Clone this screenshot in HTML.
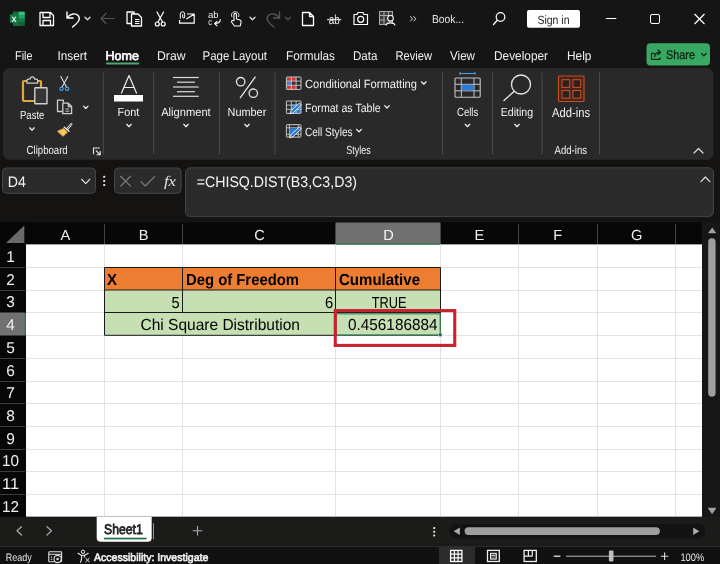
<!DOCTYPE html>
<html lang="en"><head><meta charset="utf-8"><title>Book1 - Excel</title>
<style>
html,body{margin:0;padding:0;background:#151515;overflow:hidden}
svg{display:block;font-family:"Liberation Sans", sans-serif;will-change:transform;text-rendering:geometricPrecision}
</style></head>
<body>
<svg width="720" height="564" viewBox="0 0 720 564">
<rect x="0" y="0" width="720" height="564" fill="#151515" rx="0" />
<rect x="0" y="160" width="720" height="63" fill="#151312" rx="0" />
<rect x="13" y="11.7" width="11.7" height="14.2" fill="#1d7044" rx="1.5" />
<rect x="18.5" y="11.7" width="6.2" height="3.6" fill="#33c481" rx="0" />
<rect x="18.5" y="15.3" width="6.2" height="3.5" fill="#21a366" rx="0" />
<rect x="18.5" y="18.8" width="6.2" height="3.5" fill="#107c41" rx="0" />
<rect x="18.5" y="22.3" width="6.2" height="3.6" fill="#185c37" rx="0" />
<rect x="13" y="11.7" width="5.5" height="14.2" fill="#1a6b3f" rx="0" />
<rect x="9.8" y="14.2" width="8.7" height="8.7" fill="#107c41" rx="1.2" />
<text x="11.6" y="21.6" font-size="7.6" fill="#fff" font-weight="bold" textLength="5.0" lengthAdjust="spacingAndGlyphs" >X</text>
<path d="M40 12.5 H50.5 L53.5 15.5 V25.5 H40 Z M43 12.5 V17.5 H50 V12.5 M43 25.5 V20.5 H50.5 V25.5" stroke="#fff" stroke-width="1.3" fill="none" stroke-linejoin="round"/>
<path d="M67 12 V18 H73 M67.5 17.5 C70 13.5 76 12.5 78.5 16 C80.5 19 78.5 22 75.5 24.5 L72.5 27" stroke="#fff" stroke-width="1.4" fill="none" stroke-linecap="round" stroke-linejoin="round"/>
<path d="M85.0 17.2 L87.5 19.8 L90.0 17.2" stroke="#ddd" stroke-width="1.3" fill="none" stroke-linecap="round" stroke-linejoin="round"/>
<path d="M114 18.5 H101 M106 13.5 L101 18.5 L106 23.5" stroke="#555" stroke-width="1.2" fill="none" stroke-linecap="round" stroke-linejoin="round"/>
<path d="M131 23.5 H127 V12 H134 V13.5 M131.5 14 H138 L141.5 17.5 V26 H131.5 Z" stroke="#fff" stroke-width="1.3" fill="none" stroke-linejoin="round"/>
<path d="M135 19.5 H139.5 M135 21.5 H139.5 M135 23.5 H139.5" stroke="#fff" stroke-width="1" fill="none" />
<path d="M157 12 L162.5 22 M163.5 12 L158 22" stroke="#fff" stroke-width="1.2" fill="none" stroke-linecap="round"/>
<circle cx="157.3" cy="24" r="2" stroke="#fff" stroke-width="1.2" fill="none"/><circle cx="163.2" cy="24" r="2" stroke="#fff" stroke-width="1.2" fill="none"/>
<path d="M187 14 H194.2 V23.2 H179.6 V20 M186.3 19 L194 14.3" stroke="#fff" stroke-width="1.2" fill="none" stroke-linejoin="round"/>
<path d="M180.3 18.3 V14.2 a2.2 2.4 0 0 1 4.4 0 V17 a1 1 0 0 1 -2 0 V14.6" stroke="#fff" stroke-width="1" fill="none" stroke-linecap="round"/>
<text x="208" y="18.2" font-size="9.5" fill="#f0f0f0" font-weight="normal" textLength="10.5" lengthAdjust="spacingAndGlyphs" >ab</text>
<text x="208.2" y="25.2" font-size="9.5" fill="#f0f0f0" font-weight="normal" textLength="3.8" lengthAdjust="spacingAndGlyphs" >c</text>
<path d="M220.3 19.5 C220.3 22.5 218 23.5 214.8 23.5 M217 21.3 L214.6 23.5 L217 25.8" stroke="#fff" stroke-width="1.1" fill="none" stroke-linecap="round" stroke-linejoin="round"/>
<path d="M234 21 V14.5 C234 13 236.5 13 236.5 14.5 V19 L240 20 C241 20.3 241.3 21 241 22.5 L240.3 26 H234.5 L231.5 22 C231 21 232.5 20 233.5 21" stroke="#fff" stroke-width="1.1" fill="none" stroke-linejoin="round"/>
<path d="M232 17 C230.5 14 232.5 11.8 235.2 11.8 C238 11.8 239.8 14 238.5 17" stroke="#ddd" stroke-width="1" fill="none" />
<path d="M250.0 17.2 L252.5 19.8 L255.0 17.2" stroke="#ddd" stroke-width="1.3" fill="none" stroke-linecap="round" stroke-linejoin="round"/>
<path d="M279.5 12 V18 H273.5 M279 17.5 C276.5 13.5 270.5 12.5 268 16 C266 19 268 22 271 24.5 L274 27" stroke="#555" stroke-width="1.4" fill="none" stroke-linecap="round" stroke-linejoin="round"/>
<path d="M285.5 17.2 L288 19.8 L290.5 17.2" stroke="#555" stroke-width="1.3" fill="none" stroke-linecap="round" stroke-linejoin="round"/>
<path d="M302.5 12.5 H309.5 L313.5 16.5 V25.5 H302.5 Z M309.5 12.5 V16.5 H313.5" stroke="#fff" stroke-width="1.3" fill="none" stroke-linejoin="round"/>
<text x="328.7" y="23.7" font-size="13" fill="#f0f0f0" font-weight="normal" textLength="11.0" lengthAdjust="spacingAndGlyphs" >ab</text>
<line x1="327" y1="19.7" x2="341.3" y2="19.7" stroke="#f0f0f0" stroke-width="1" />
<path d="M354 14.5 H357 L358 12.5 H363 L364 14.5 H367.5 V24.5 H354 Z" stroke="#fff" stroke-width="1.2" fill="none" stroke-linejoin="round"/>
<circle cx="360.7" cy="19.3" r="3" stroke="#fff" stroke-width="1.2" fill="none"/>
<rect x="379.5" y="11.5" width="13" height="13" fill="#3a3a3a" rx="0" stroke="#aaa" stroke-width="1" />
<path d="M379.5 15.5 H392.5 M384 11.5 V24.5 M388.5 11.5 V15.5 M379.5 20 H385" stroke="#aaa" stroke-width="1" fill="none" />
<circle cx="390.5" cy="18.3" r="2.8" stroke="#fff" stroke-width="1.1" fill="#151515"/>
<path d="M386 25.5 C386.5 22 394.5 22 395 25.5" stroke="#fff" stroke-width="1.1" fill="#151515" />
<path d="M410.5 16.5 L412.5 18.8 L410.5 21 M413.8 16.5 L415.8 18.8 L413.8 21" stroke="#ddd" stroke-width="1" fill="none" stroke-linecap="round" stroke-linejoin="round"/>
<text x="432" y="23" font-size="11.5" fill="#e6e6e6" font-weight="normal" textLength="32" lengthAdjust="spacingAndGlyphs" >Book...</text>
<circle cx="500.5" cy="17" r="4.3" stroke="#fff" stroke-width="1.2" fill="none"/>
<line x1="497.3" y1="20.3" x2="493.5" y2="24.5" stroke="#fff" stroke-width="1.3" stroke-linecap="round"/>
<rect x="527" y="10" width="53" height="17.8" fill="#fff" rx="2" />
<text x="537.5" y="23.5" font-size="12" fill="#1a1a1a" font-weight="normal" textLength="32.0" lengthAdjust="spacingAndGlyphs" >Sign in</text>
<line x1="605.8" y1="18.5" x2="616.3" y2="18.5" stroke="#fff" stroke-width="1" />
<rect x="650.5" y="14.5" width="9" height="9" fill="none" rx="1.5" stroke="#fff" stroke-width="1" />
<path d="M694.5 14 L704.5 24 M704.5 14 L694.5 24" stroke="#fff" stroke-width="1.2" fill="none" />
<text x="15" y="59.5" font-size="12.6" fill="#f0f0f0" font-weight="normal" textLength="17.5" lengthAdjust="spacingAndGlyphs" >File</text>
<text x="57.5" y="59.5" font-size="12.6" fill="#f0f0f0" font-weight="normal" textLength="29.5" lengthAdjust="spacingAndGlyphs" >Insert</text>
<text x="157" y="59.5" font-size="12.6" fill="#f0f0f0" font-weight="normal" textLength="28.5" lengthAdjust="spacingAndGlyphs" >Draw</text>
<text x="202.5" y="59.5" font-size="12.6" fill="#f0f0f0" font-weight="normal" textLength="64.5" lengthAdjust="spacingAndGlyphs" >Page Layout</text>
<text x="286" y="59.5" font-size="12.6" fill="#f0f0f0" font-weight="normal" textLength="49" lengthAdjust="spacingAndGlyphs" >Formulas</text>
<text x="353" y="59.5" font-size="12.6" fill="#f0f0f0" font-weight="normal" textLength="24.5" lengthAdjust="spacingAndGlyphs" >Data</text>
<text x="395.5" y="59.5" font-size="12.6" fill="#f0f0f0" font-weight="normal" textLength="36.5" lengthAdjust="spacingAndGlyphs" >Review</text>
<text x="450" y="59.5" font-size="12.6" fill="#f0f0f0" font-weight="normal" textLength="25" lengthAdjust="spacingAndGlyphs" >View</text>
<text x="494" y="59.5" font-size="12.6" fill="#f0f0f0" font-weight="normal" textLength="54" lengthAdjust="spacingAndGlyphs" >Developer</text>
<text x="567" y="59.5" font-size="12.6" fill="#f0f0f0" font-weight="normal" textLength="24.5" lengthAdjust="spacingAndGlyphs" >Help</text>
<text x="105.5" y="59.5" font-size="12.6" fill="#fff" font-weight="normal" textLength="33.5" lengthAdjust="spacingAndGlyphs" stroke="#fff" stroke-width="0.65">Home</text>
<rect x="106" y="62.6" width="33.3" height="1.9" fill="#4ea870" rx="0.9" />
<rect x="646.5" y="43.2" width="63.5" height="22.2" fill="#38a862" rx="4" />
<path d="M654.3 53.3 H651.5 V59.3 H660 V57.6 M654.6 56.8 C654.9 53.8 656.8 52.3 659.8 52.3 M657.8 50 L660.6 52.3 L657.8 54.7" stroke="#0c2414" stroke-width="1.15" fill="none" stroke-linecap="round" stroke-linejoin="round"/>
<text x="666.1" y="58.9" font-size="12.6" fill="#0c2414" font-weight="normal" textLength="28.9" lengthAdjust="spacingAndGlyphs" stroke="#0c2414" stroke-width="0.3">Share</text>
<path d="M701.5 53.5 L703.8 55.900000000000006 L706.0999999999999 53.5" stroke="#0c2414" stroke-width="1.2" fill="none" stroke-linecap="round" stroke-linejoin="round"/>
<rect x="3" y="68" width="710.5" height="91.8" fill="#292929" rx="7" />
<line x1="103.3" y1="72.5" x2="103.3" y2="154.5" stroke="#4a4a4a" stroke-width="1" />
<line x1="153.7" y1="72.5" x2="153.7" y2="154.5" stroke="#4a4a4a" stroke-width="1" />
<line x1="219.5" y1="72.5" x2="219.5" y2="154.5" stroke="#4a4a4a" stroke-width="1" />
<line x1="275" y1="72.5" x2="275" y2="154.5" stroke="#4a4a4a" stroke-width="1" />
<line x1="442.5" y1="72.5" x2="442.5" y2="154.5" stroke="#4a4a4a" stroke-width="1" />
<line x1="492.5" y1="72.5" x2="492.5" y2="154.5" stroke="#4a4a4a" stroke-width="1" />
<line x1="542" y1="72.5" x2="542" y2="154.5" stroke="#4a4a4a" stroke-width="1" />
<line x1="599.5" y1="72.5" x2="599.5" y2="154.5" stroke="#4a4a4a" stroke-width="1" />
<rect x="23" y="81" width="18" height="20" fill="none" rx="1" stroke="#e0a83c" stroke-width="2.2" />
<path d="M27 83.2 V80.2 Q27 79.2 28 79.2 H30 Q30.3 76.8 32.3 76.8 Q34.3 76.8 34.6 79.2 H36.6 Q37.6 79.2 37.6 80.2 V83.2 Z" stroke="#cfcfcf" stroke-width="1.2" fill="#292929" stroke-linejoin="round"/>
<rect x="34.8" y="87.8" width="12.2" height="16" fill="#353535" rx="0.6" stroke="#d0d0d0" stroke-width="1.4" />
<text x="20" y="118.6" font-size="11.8" fill="#f0f0f0" font-weight="normal" textLength="24.4" lengthAdjust="spacingAndGlyphs" >Paste</text>
<path d="M29.75 127.8 L32 130.2 L34.25 127.8" stroke="#eee" stroke-width="1.25" fill="none" stroke-linecap="round" stroke-linejoin="round"/>
<path d="M60.8 76.5 L66.6 87.2 M67.8 76.5 L62 87.2" stroke="#ddd" stroke-width="1.1" fill="none" stroke-linecap="round"/>
<circle cx="61.5" cy="88.8" r="1.7" stroke="#4aa3e8" stroke-width="1.1" fill="none"/><circle cx="67.1" cy="88.8" r="1.7" stroke="#4aa3e8" stroke-width="1.1" fill="none"/>
<path d="M62 111.5 H57.5 V100.2 H63.3 V102.5" stroke="#cfcfcf" stroke-width="1.3" fill="none" stroke-linejoin="round"/>
<path d="M62.8 103.2 H68.3 L71.6 106.5 V113.7 H62.8 Z M68.3 103.2 V106.5 H71.6" stroke="#cfcfcf" stroke-width="1.3" fill="none" stroke-linejoin="round"/>
<path d="M65.3 109 H69.3 M65.3 111.2 H69.3" stroke="#cfcfcf" stroke-width="0.9" fill="none" />
<path d="M83.55 106.1 L85.8 108.5 L88.05 106.1" stroke="#eee" stroke-width="1.25" fill="none" stroke-linecap="round" stroke-linejoin="round"/>
<path d="M71.3 124.3 L67.3 129" stroke="#e6e6e6" stroke-width="2.4" fill="none" stroke-linecap="round"/>
<path d="M71.3 124.3 L67.3 129" stroke="#292929" stroke-width="0.8" fill="none" stroke-linecap="round"/>
<path d="M64.3 127.3 L69 131.3" stroke="#e6e6e6" stroke-width="1.5" fill="none" stroke-linecap="round"/>
<path d="M63.6 128.6 L57.6 131.3 L63 136.3 L67.3 132.3 Z" stroke="#e8a830" stroke-width="1" fill="#f2c868" stroke-linejoin="round"/>
<text x="26.6" y="154.2" font-size="11.8" fill="#f0f0f0" font-weight="normal" textLength="41.1" lengthAdjust="spacingAndGlyphs" >Clipboard</text>
<path d="M93.5 154.3 V148 H99.8" stroke="#e6e6e6" stroke-width="1.1" fill="none" stroke-linejoin="miter"/>
<path d="M95.8 150.3 L100 154.5 M100.2 151 V154.7 H96.5" stroke="#e6e6e6" stroke-width="1.1" fill="none" />
<path d="M121.3 93.5 L129 75.5 L136.7 93.5 M123.8 87.5 H134.2" stroke="#f0f0f0" stroke-width="1.2" fill="none" stroke-linejoin="round"/>
<rect x="114" y="95" width="29" height="6.5" fill="#fff" rx="0" />
<text x="117.5" y="115.5" font-size="11.8" fill="#f0f0f0" font-weight="normal" textLength="21.8" lengthAdjust="spacingAndGlyphs" >Font</text>
<path d="M126.75 124.3 L129 126.7 L131.25 124.3" stroke="#eee" stroke-width="1.25" fill="none" stroke-linecap="round" stroke-linejoin="round"/>
<line x1="173" y1="77.5" x2="198.7" y2="77.5" stroke="#dcdcdc" stroke-width="1.2" />
<line x1="177" y1="82.2" x2="195" y2="82.2" stroke="#dcdcdc" stroke-width="1.2" />
<line x1="173" y1="87" x2="198.7" y2="87" stroke="#dcdcdc" stroke-width="1.2" />
<line x1="177" y1="91.7" x2="195" y2="91.7" stroke="#dcdcdc" stroke-width="1.2" />
<line x1="173" y1="96.3" x2="198.7" y2="96.3" stroke="#dcdcdc" stroke-width="1.2" />
<text x="161.2" y="115.5" font-size="11.8" fill="#f0f0f0" font-weight="normal" textLength="49.5" lengthAdjust="spacingAndGlyphs" >Alignment</text>
<path d="M183.75 124.3 L186 126.7 L188.25 124.3" stroke="#eee" stroke-width="1.25" fill="none" stroke-linecap="round" stroke-linejoin="round"/>
<circle cx="240.7" cy="81.7" r="4.2" stroke="#e6e6e6" stroke-width="1.3" fill="none"/><circle cx="253.3" cy="93.2" r="4.2" stroke="#e6e6e6" stroke-width="1.3" fill="none"/>
<line x1="255.5" y1="76.7" x2="240" y2="98.2" stroke="#e6e6e6" stroke-width="1.3" />
<text x="227.5" y="115.5" font-size="11.8" fill="#f0f0f0" font-weight="normal" textLength="38.8" lengthAdjust="spacingAndGlyphs" >Number</text>
<path d="M244.75 124.3 L247 126.7 L249.25 124.3" stroke="#eee" stroke-width="1.25" fill="none" stroke-linecap="round" stroke-linejoin="round"/>
<rect x="286.7" y="77.3" width="9.5" height="3.9" fill="#d8332f" rx="0" />
<rect x="286.7" y="85.6" width="9.5" height="3.9" fill="#d8332f" rx="0" />
<rect x="286.7" y="81.3" width="4.6" height="4.2" fill="#3b7fd8" rx="0" />
<rect x="291.5" y="81.4" width="4.6" height="4" fill="#4a2626" rx="0" />
<rect x="286.4" y="77" width="14.6" height="12.4" fill="none" rx="0.5" stroke="#c8c8c8" stroke-width="1" />
<path d="M286.4 81.1 H301.0 M286.4 85.3 H301.0 M291.29999999999995 77 V89.4 M296.09999999999997 77 V89.4" stroke="#c8c8c8" stroke-width="0.9" fill="none" />
<text x="305" y="88" font-size="12.0" fill="#f0f0f0" font-weight="normal" textLength="112" lengthAdjust="spacingAndGlyphs" >Conditional Formatting</text>
<path d="M421.5 81.8 L423.8 84.2 L426.1 81.8" stroke="#eee" stroke-width="1.25" fill="none" stroke-linecap="round" stroke-linejoin="round"/>
<rect x="291.5" y="104.5" width="9.5" height="9" fill="#2b7cd3" rx="0" />
<rect x="286.4" y="101" width="14.6" height="12.4" fill="none" rx="0.5" stroke="#c8c8c8" stroke-width="1" />
<path d="M286.4 105.1 H301.0 M286.4 109.3 H301.0 M291.29999999999995 101 V113.4 M296.09999999999997 101 V113.4" stroke="#c8c8c8" stroke-width="0.9" fill="none" />
<path d="M289.8 113.8 L291 110.5 L299.5 103 L301.3 105 L293 112.8 Z" stroke="#f0f0f0" stroke-width="0.9" fill="#2b7cd3" stroke-linejoin="round"/>
<text x="305" y="111.5" font-size="12.0" fill="#f0f0f0" font-weight="normal" textLength="75.7" lengthAdjust="spacingAndGlyphs" >Format as Table</text>
<path d="M384.7 105.6 L387 108.0 L389.3 105.6" stroke="#eee" stroke-width="1.25" fill="none" stroke-linecap="round" stroke-linejoin="round"/>
<rect x="286.4" y="124.7" width="14.6" height="12.4" fill="none" rx="0.5" stroke="#c8c8c8" stroke-width="1" />
<path d="M286.4 127.8 H301 M289.4 124.7 V137.1 M286.4 134.3 H301 M298.2 124.7 V137.1" stroke="#c8c8c8" stroke-width="0.9" fill="none" />
<rect x="289.9" y="128.3" width="7.8" height="5.5" fill="#2b7cd3" rx="0" />
<path d="M289.8 137.8 L291 134.5 L299.5 127 L301.3 129 L293 136.8 Z" stroke="#f0f0f0" stroke-width="0.9" fill="#2b7cd3" stroke-linejoin="round"/>
<text x="305" y="135.5" font-size="12.0" fill="#f0f0f0" font-weight="normal" textLength="47.5" lengthAdjust="spacingAndGlyphs" >Cell Styles</text>
<path d="M356.7 129.5 L359 131.89999999999998 L361.3 129.5" stroke="#eee" stroke-width="1.25" fill="none" stroke-linecap="round" stroke-linejoin="round"/>
<text x="346.2" y="154.2" font-size="11.8" fill="#f0f0f0" font-weight="normal" textLength="24.5" lengthAdjust="spacingAndGlyphs" >Styles</text>
<path d="M460 73.5 H475 M460 72 V75 M475 72 V75" stroke="#4aa3e8" stroke-width="1" fill="none" />
<rect x="455" y="78" width="25.2" height="19.3" fill="none" rx="1" stroke="#c4c4c4" stroke-width="1.1" />
<path d="M455 84.3 H480.2 M455 90.8 H480.2 M461.3 78 V97.3 M474 78 V97.3" stroke="#c4c4c4" stroke-width="1" fill="none" />
<rect x="461.8" y="84.8" width="11.7" height="5.5" fill="#2b7cd3" rx="0" />
<text x="457" y="115.5" font-size="11.8" fill="#f0f0f0" font-weight="normal" textLength="21.2" lengthAdjust="spacingAndGlyphs" >Cells</text>
<path d="M465.25 124.3 L467.5 126.7 L469.75 124.3" stroke="#eee" stroke-width="1.25" fill="none" stroke-linecap="round" stroke-linejoin="round"/>
<circle cx="521" cy="84.5" r="9.5" stroke="#e6e6e6" stroke-width="1.3" fill="none"/>
<line x1="514" y1="91.5" x2="504" y2="100.5" stroke="#e6e6e6" stroke-width="1.4" stroke-linecap="round"/>
<text x="500.7" y="115.5" font-size="11.8" fill="#f0f0f0" font-weight="normal" textLength="32.5" lengthAdjust="spacingAndGlyphs" >Editing</text>
<path d="M514.75 124.3 L517 126.7 L519.25 124.3" stroke="#eee" stroke-width="1.25" fill="none" stroke-linecap="round" stroke-linejoin="round"/>
<rect x="558.5" y="76" width="25.5" height="25.5" fill="#4a2418" rx="1" stroke="#c0502a" stroke-width="1.2" />
<rect x="562" y="79.7" width="7.7" height="7.7" fill="#2c211d" rx="0" stroke="#c0502a" stroke-width="1.1" />
<rect x="573" y="79.7" width="7.7" height="7.7" fill="#2c211d" rx="0" stroke="#c0502a" stroke-width="1.1" />
<rect x="562" y="90.5" width="7.7" height="7.7" fill="#2c211d" rx="0" stroke="#c0502a" stroke-width="1.1" />
<rect x="573" y="90.5" width="7.7" height="7.7" fill="#2c211d" rx="0" stroke="#c0502a" stroke-width="1.1" />
<text x="552" y="117.3" font-size="13.2" fill="#f0f0f0" font-weight="normal" textLength="38" lengthAdjust="spacingAndGlyphs" >Add-ins</text>
<text x="554.5" y="154.2" font-size="11.8" fill="#f0f0f0" font-weight="normal" textLength="32.5" lengthAdjust="spacingAndGlyphs" >Add-ins</text>
<path d="M694 153 L698.5 148.5 L703 153" stroke="#ddd" stroke-width="1.2" fill="none" stroke-linecap="round" stroke-linejoin="round"/>
<rect x="2.5" y="168" width="93" height="25.3" fill="#2b2b2b" rx="4" stroke="#454545" stroke-width="1" />
<text x="7.7" y="187" font-size="15.3" fill="#f0f0f0" font-weight="normal" textLength="18.1" lengthAdjust="spacingAndGlyphs" >D4</text>
<path d="M81.60000000000001 179.25 L85.7 183.55 L89.8 179.25" stroke="#e6e6e6" stroke-width="1.1" fill="none" stroke-linecap="round" stroke-linejoin="round"/>
<rect x="103.2" y="175.7" width="2" height="2" rx="0.5" fill="#e0e0e0"/>
<rect x="103.2" y="179.9" width="2" height="2" rx="0.5" fill="#e0e0e0"/>
<rect x="103.2" y="184" width="2" height="2" rx="0.5" fill="#e0e0e0"/>
<rect x="114.5" y="168" width="66.6" height="25.3" fill="#2b2b2b" rx="4" stroke="#454545" stroke-width="1" />
<path d="M120.3 176 L130.8 186.4 M130.8 176 L120.3 186.4" stroke="#808080" stroke-width="1.1" fill="none" />
<path d="M140.8 181.5 L145.3 186 L154.8 176.3" stroke="#808080" stroke-width="1.1" fill="none" />
<text x="164" y="186.3" font-size="14.5" fill="#e6e6e6" font-weight="normal" textLength="12" lengthAdjust="spacingAndGlyphs" font-family='"Liberation Serif", serif' font-style="italic">fx</text>
<rect x="185.5" y="167.8" width="528" height="48.8" fill="#2b2b2b" rx="5" stroke="#454545" stroke-width="1" />
<text x="196.7" y="187" font-size="15.3" fill="#f5f5f5" font-weight="normal" textLength="160.3" lengthAdjust="spacingAndGlyphs" >=CHISQ.DIST(B3,C3,D3)</text>
<path d="M701 181.7 L705.4 177 L709.8 181.7" stroke="#ddd" stroke-width="1.2" fill="none" stroke-linecap="round" stroke-linejoin="round"/>
<rect x="0" y="222.5" width="702" height="22" fill="#070707" rx="0" />
<rect x="0" y="222.5" width="26" height="294.3" fill="#070707" rx="0" />
<rect x="26" y="244.4" width="676" height="272.4" fill="#fff" rx="0" />
<path d="M24.3 225.5 V243 H6 Z" stroke="none" stroke-width="1" fill="#6a6a6a" />
<rect x="335.5" y="222.5" width="105" height="21.5" fill="#717171" rx="0" />
<rect x="335.5" y="243.4" width="105" height="1.2" fill="#2a7a4e" rx="0" />
<rect x="0" y="313" width="25" height="22.5" fill="#717171" rx="0" />
<rect x="24.6" y="313" width="1.4" height="22.5" fill="#2a7a4e" rx="0" />
<line x1="104.5" y1="224" x2="104.5" y2="244" stroke="#444" stroke-width="1" />
<line x1="182.5" y1="224" x2="182.5" y2="244" stroke="#444" stroke-width="1" />
<line x1="335.5" y1="224" x2="335.5" y2="244" stroke="#444" stroke-width="1" />
<line x1="440.5" y1="224" x2="440.5" y2="244" stroke="#444" stroke-width="1" />
<line x1="518.5" y1="224" x2="518.5" y2="244" stroke="#444" stroke-width="1" />
<line x1="597.5" y1="224" x2="597.5" y2="244" stroke="#444" stroke-width="1" />
<line x1="675.5" y1="224" x2="675.5" y2="244" stroke="#444" stroke-width="1" />
<line x1="0" y1="267.5" x2="25" y2="267.5" stroke="#3c3c3c" stroke-width="1" />
<line x1="0" y1="290.5" x2="25" y2="290.5" stroke="#3c3c3c" stroke-width="1" />
<line x1="0" y1="312.5" x2="25" y2="312.5" stroke="#3c3c3c" stroke-width="1" />
<line x1="0" y1="335.5" x2="25" y2="335.5" stroke="#3c3c3c" stroke-width="1" />
<line x1="0" y1="358.5" x2="25" y2="358.5" stroke="#3c3c3c" stroke-width="1" />
<line x1="0" y1="381.5" x2="25" y2="381.5" stroke="#3c3c3c" stroke-width="1" />
<line x1="0" y1="403.5" x2="25" y2="403.5" stroke="#3c3c3c" stroke-width="1" />
<line x1="0" y1="426.5" x2="25" y2="426.5" stroke="#3c3c3c" stroke-width="1" />
<line x1="0" y1="449.5" x2="25" y2="449.5" stroke="#3c3c3c" stroke-width="1" />
<line x1="0" y1="471.5" x2="25" y2="471.5" stroke="#3c3c3c" stroke-width="1" />
<line x1="0" y1="494.5" x2="25" y2="494.5" stroke="#3c3c3c" stroke-width="1" />
<line x1="104.5" y1="244.4" x2="104.5" y2="516.8" stroke="#e2e2e2" stroke-width="1" />
<line x1="182.5" y1="244.4" x2="182.5" y2="516.8" stroke="#e2e2e2" stroke-width="1" />
<line x1="335.5" y1="244.4" x2="335.5" y2="516.8" stroke="#e2e2e2" stroke-width="1" />
<line x1="440.5" y1="244.4" x2="440.5" y2="516.8" stroke="#e2e2e2" stroke-width="1" />
<line x1="518.5" y1="244.4" x2="518.5" y2="516.8" stroke="#e2e2e2" stroke-width="1" />
<line x1="597.5" y1="244.4" x2="597.5" y2="516.8" stroke="#e2e2e2" stroke-width="1" />
<line x1="675.5" y1="244.4" x2="675.5" y2="516.8" stroke="#e2e2e2" stroke-width="1" />
<line x1="26" y1="267.5" x2="702" y2="267.5" stroke="#e2e2e2" stroke-width="1" />
<line x1="26" y1="290.5" x2="702" y2="290.5" stroke="#e2e2e2" stroke-width="1" />
<line x1="26" y1="312.5" x2="702" y2="312.5" stroke="#e2e2e2" stroke-width="1" />
<line x1="26" y1="335.5" x2="702" y2="335.5" stroke="#e2e2e2" stroke-width="1" />
<line x1="26" y1="358.5" x2="702" y2="358.5" stroke="#e2e2e2" stroke-width="1" />
<line x1="26" y1="381.5" x2="702" y2="381.5" stroke="#e2e2e2" stroke-width="1" />
<line x1="26" y1="403.5" x2="702" y2="403.5" stroke="#e2e2e2" stroke-width="1" />
<line x1="26" y1="426.5" x2="702" y2="426.5" stroke="#e2e2e2" stroke-width="1" />
<line x1="26" y1="449.5" x2="702" y2="449.5" stroke="#e2e2e2" stroke-width="1" />
<line x1="26" y1="471.5" x2="702" y2="471.5" stroke="#e2e2e2" stroke-width="1" />
<line x1="26" y1="494.5" x2="702" y2="494.5" stroke="#e2e2e2" stroke-width="1" />
<text x="65.3" y="239.6" font-size="14.6" fill="#f0f0f0" font-weight="normal" text-anchor="middle" >A</text>
<text x="143.5" y="239.6" font-size="14.6" fill="#f0f0f0" font-weight="normal" text-anchor="middle" >B</text>
<text x="259.5" y="239.6" font-size="14.6" fill="#f0f0f0" font-weight="normal" text-anchor="middle" >C</text>
<text x="388.5" y="239.6" font-size="14.6" fill="#f5f5f5" font-weight="normal" text-anchor="middle" >D</text>
<text x="479.3" y="239.6" font-size="14.6" fill="#f0f0f0" font-weight="normal" text-anchor="middle" >E</text>
<text x="557.8" y="239.6" font-size="14.6" fill="#f0f0f0" font-weight="normal" text-anchor="middle" >F</text>
<text x="636.7" y="239.6" font-size="14.6" fill="#f0f0f0" font-weight="normal" text-anchor="middle" >G</text>
<text x="10.6" y="262.0" font-size="15.6" fill="#f0f0f0" font-weight="normal" text-anchor="middle" textLength="8.6" lengthAdjust="spacingAndGlyphs">1</text>
<text x="10.6" y="284.7" font-size="15.6" fill="#f0f0f0" font-weight="normal" text-anchor="middle" textLength="8.6" lengthAdjust="spacingAndGlyphs">2</text>
<text x="10.6" y="307.4" font-size="15.6" fill="#f0f0f0" font-weight="normal" text-anchor="middle" textLength="8.6" lengthAdjust="spacingAndGlyphs">3</text>
<text x="10.6" y="330.1" font-size="15.6" fill="#f0f0f0" font-weight="normal" text-anchor="middle" textLength="8.6" lengthAdjust="spacingAndGlyphs">4</text>
<text x="10.6" y="352.8" font-size="15.6" fill="#f0f0f0" font-weight="normal" text-anchor="middle" textLength="8.6" lengthAdjust="spacingAndGlyphs">5</text>
<text x="10.6" y="375.5" font-size="15.6" fill="#f0f0f0" font-weight="normal" text-anchor="middle" textLength="8.6" lengthAdjust="spacingAndGlyphs">6</text>
<text x="10.6" y="398.2" font-size="15.6" fill="#f0f0f0" font-weight="normal" text-anchor="middle" textLength="8.6" lengthAdjust="spacingAndGlyphs">7</text>
<text x="10.6" y="420.9" font-size="15.6" fill="#f0f0f0" font-weight="normal" text-anchor="middle" textLength="8.6" lengthAdjust="spacingAndGlyphs">8</text>
<text x="10.6" y="443.6" font-size="15.6" fill="#f0f0f0" font-weight="normal" text-anchor="middle" textLength="8.6" lengthAdjust="spacingAndGlyphs">9</text>
<text x="10.5" y="466.3" font-size="15.6" fill="#f0f0f0" font-weight="normal" text-anchor="middle" textLength="17" lengthAdjust="spacingAndGlyphs">10</text>
<text x="10.5" y="489.0" font-size="15.6" fill="#f0f0f0" font-weight="normal" text-anchor="middle" textLength="17" lengthAdjust="spacingAndGlyphs">11</text>
<text x="10.5" y="511.7" font-size="15.6" fill="#f0f0f0" font-weight="normal" text-anchor="middle" textLength="17" lengthAdjust="spacingAndGlyphs">12</text>
<rect x="104.5" y="267.5" width="336" height="22.5" fill="#ed7d31" rx="0" />
<rect x="104.5" y="290" width="336" height="45.30000000000001" fill="#c6e0b4" rx="0" />
<path d="M104.5 267.5 H440.5 V335.3 H104.5 Z M104.5 290 H440.5 M104.5 312.5 H440.5 M182.5 267.5 V312.5 M335.5 267.5 V335.3" stroke="#1a1a1a" stroke-width="1" fill="none" />
<text x="107" y="284.9" font-size="16" fill="#000" font-weight="bold" textLength="10" lengthAdjust="spacingAndGlyphs" >X</text>
<text x="186" y="284.9" font-size="16" fill="#000" font-weight="bold" textLength="113" lengthAdjust="spacingAndGlyphs" >Deg of Freedom</text>
<text x="339" y="284.9" font-size="16" fill="#000" font-weight="bold" textLength="81" lengthAdjust="spacingAndGlyphs" >Cumulative</text>
<text x="171.6" y="307.5" font-size="16" fill="#000" font-weight="normal" textLength="8.2" lengthAdjust="spacingAndGlyphs" >5</text>
<text x="325" y="307.5" font-size="16" fill="#000" font-weight="normal" textLength="8.2" lengthAdjust="spacingAndGlyphs" >6</text>
<text x="371.7" y="307.5" font-size="16" fill="#000" font-weight="normal" textLength="34.8" lengthAdjust="spacingAndGlyphs" >TRUE</text>
<text x="140.5" y="330.3" font-size="16" fill="#000" font-weight="normal" textLength="159.5" lengthAdjust="spacingAndGlyphs" >Chi Square Distribution</text>
<text x="348" y="330.3" font-size="16" fill="#000" font-weight="normal" textLength="89.5" lengthAdjust="spacingAndGlyphs" >0.456186884</text>
<rect x="336.2" y="313.8" width="104" height="21.2" fill="none" rx="0" stroke="#3f8a5e" stroke-width="1.3" />
<rect x="438.5" y="333" width="3.5" height="3.5" fill="#1e6e42" rx="0" stroke="#e8f0e8" stroke-width="0.5" />
<rect x="335.25" y="310.6" width="119.5" height="34.8" fill="none" rx="0" stroke="#c9212d" stroke-width="3.1" />
<rect x="702" y="222.5" width="18" height="294.3" fill="#171717" rx="0" />
<path d="M708 233.3 L712.2 227.5 L716.3 233.3 Z" stroke="none" stroke-width="1" fill="#a0a0a0" />
<rect x="708.2" y="238.3" width="7.4" height="158.5" fill="#9e9e9e" rx="3.7" />
<path d="M707.7 507.8 L712.1 514.2 L716.5 507.8 Z" stroke="none" stroke-width="1" fill="#a0a0a0" />
<rect x="0" y="516.8" width="720" height="29.5" fill="#1b1b1a" rx="0" />
<rect x="0" y="546" width="720" height="1" fill="#2a2a2a" rx="0" />
<path d="M21.5 526.7 L17 530.8 L21.5 535" stroke="#aaa" stroke-width="1.2" fill="none" stroke-linecap="round" stroke-linejoin="round"/>
<path d="M47 526.7 L51.5 530.8 L47 535" stroke="#aaa" stroke-width="1.2" fill="none" stroke-linecap="round" stroke-linejoin="round"/>
<path d="M96.7 516.8 H151.7 V537.7 Q151.7 541.7 147.7 541.7 H100.7 Q96.7 541.7 96.7 537.7 Z" stroke="none" stroke-width="1" fill="#fff" />
<text x="104" y="534.3" font-size="14" fill="#222" font-weight="normal" textLength="38.7" lengthAdjust="spacingAndGlyphs" stroke="#222" stroke-width="0.75">Sheet1</text>
<rect x="104" y="537.7" width="42.5" height="1.7" fill="#1e6e42" rx="0" />
<line x1="153.5" y1="523.3" x2="153.5" y2="539.3" stroke="#999" stroke-width="1" />
<path d="M192.7 530.8 H202.3 M197.5 526 V535.6" stroke="#aaa" stroke-width="1.1" fill="none" />
<rect x="433.2" y="527" width="2" height="2" rx="0.4" fill="#e0e0e0"/>
<rect x="433.2" y="530.7" width="2" height="2" rx="0.4" fill="#e0e0e0"/>
<rect x="433.2" y="534.5" width="2" height="2" rx="0.4" fill="#e0e0e0"/>
<rect x="449.4" y="524" width="256" height="14.6" fill="#121212" rx="7.3" />
<path d="M459.9 527.4 L453.6 531.2 L459.9 535 Z" stroke="none" stroke-width="1" fill="#aaa" />
<rect x="464.6" y="527.2" width="195.3" height="7.8" fill="#9e9e9e" rx="3.9" />
<path d="M693.2 527.4 L699.3 531.2 L693.2 535 Z" stroke="none" stroke-width="1" fill="#aaa" />
<rect x="0" y="547" width="720" height="17" fill="#111111" rx="0" />
<text x="5.7" y="560.8" font-size="10.8" fill="#e6e6e6" font-weight="normal" textLength="26.0" lengthAdjust="spacingAndGlyphs" >Ready</text>
<rect x="48.8" y="551.8" width="12.8" height="10" fill="none" rx="0.8" stroke="#e0e0e0" stroke-width="1.1" />
<line x1="48.8" y1="554.3" x2="61.6" y2="554.3" stroke="#e0e0e0" stroke-width="1" />
<path d="M50.8 557 H52.3 M50.8 559.3 H52.3" stroke="#e0e0e0" stroke-width="1" fill="none" />
<circle cx="57.6" cy="559" r="3.6" stroke="#e0e0e0" stroke-width="1.1" fill="#111"/><circle cx="57.6" cy="559" r="1.3" fill="#e0e0e0"/>
<circle cx="83" cy="551.8" r="1.7" stroke="#eee" stroke-width="1" fill="none"/>
<path d="M78 553.3 L81.3 555.3 H84.7 L88.2 553.3 M81.6 555.3 V558.5 L80.6 562.3 M84.4 555.3 V557" stroke="#eee" stroke-width="1.1" fill="none" stroke-linecap="round" stroke-linejoin="round"/>
<path d="M85.4 558 L89.6 562.2 M89.6 558 L85.4 562.2" stroke="#eee" stroke-width="1" fill="none" />
<text x="94" y="560.8" font-size="10.8" fill="#f0f0f0" font-weight="normal" textLength="114.3" lengthAdjust="spacingAndGlyphs" stroke="#f0f0f0" stroke-width="0.6">Accessibility: Investigate</text>
<rect x="439" y="547" width="36" height="17" fill="#2c2c2c" rx="0" />
<rect x="450.6" y="550.4" width="11.3" height="11.1" fill="none" rx="0" stroke="#fff" stroke-width="1.3" />
<path d="M450.6 554.1 H461.9 M450.6 557.8 H461.9 M454.4 550.4 V561.5 M458.1 550.4 V561.5" stroke="#fff" stroke-width="1.2" fill="none" />
<rect x="487.5" y="550.4" width="11.8" height="11.1" fill="none" rx="0" stroke="#f0f0f0" stroke-width="1.3" />
<rect x="490.5" y="553.3" width="5.8" height="5.8" fill="#555" rx="0" stroke="#f0f0f0" stroke-width="1" />
<line x1="491.5" y1="555.5" x2="495.3" y2="555.5" stroke="#ddd" stroke-width="0.8" />
<rect x="524.1" y="550.4" width="12.2" height="11.1" fill="none" rx="0" stroke="#f0f0f0" stroke-width="1.3" />
<path d="M524.1 556.2 H532.3 M528.4 550.4 V556.2 M532.3 550.4 V556.2" stroke="#f0f0f0" stroke-width="1.2" fill="none" />
<line x1="553.8" y1="556.2" x2="560.4" y2="556.2" stroke="#eee" stroke-width="1.25" />
<line x1="566" y1="556.2" x2="656" y2="556.2" stroke="#bbb" stroke-width="1" />
<rect x="608.9" y="550.6" width="4.6" height="10.8" fill="#bdbdbd" rx="1" />
<path d="M660.9 556.2 H668.3 M664.6 552.5 V559.9" stroke="#ddd" stroke-width="1.1" fill="none" />
<text x="680.4" y="560.8" font-size="10.8" fill="#e6e6e6" font-weight="normal" textLength="23.8" lengthAdjust="spacingAndGlyphs" >100%</text>
</svg>
</body></html>
